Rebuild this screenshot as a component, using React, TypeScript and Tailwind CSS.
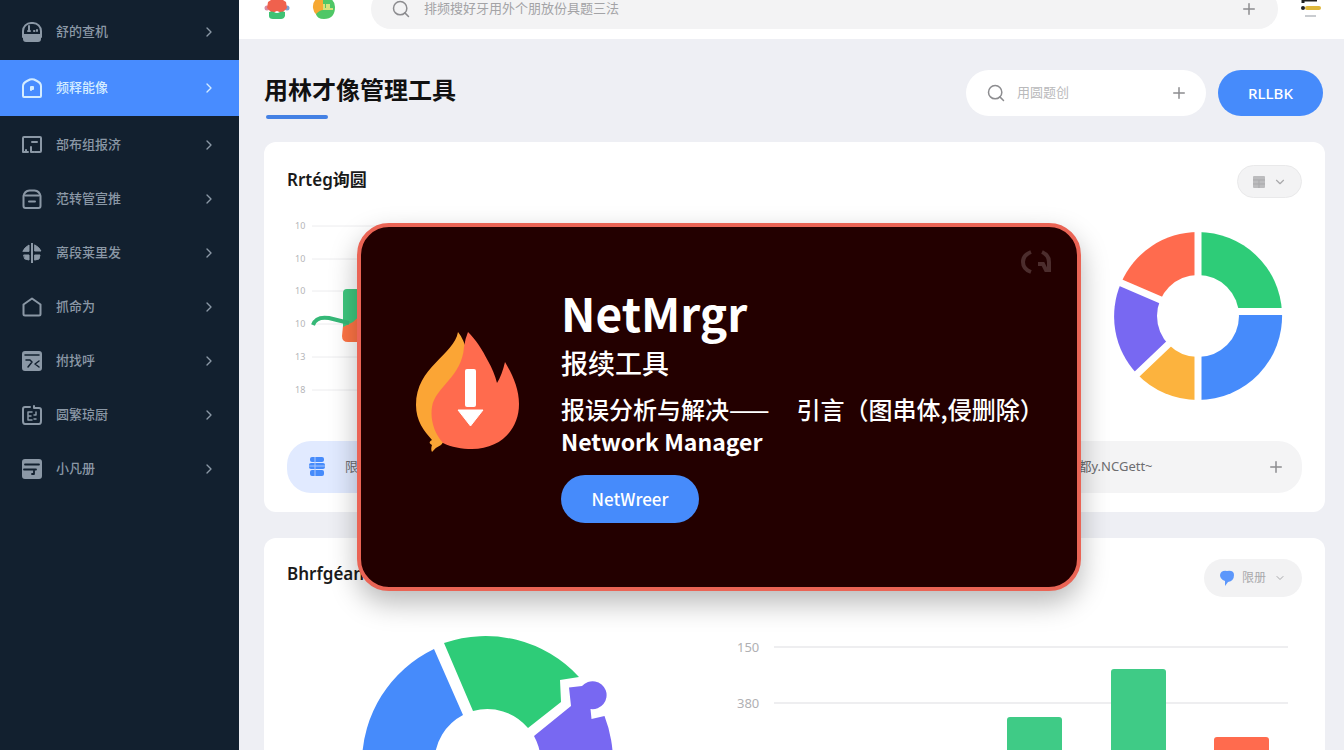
import type { ReactNode } from "react";
import { ChevronDown, ChevronRight, Plus, Search } from "lucide-react";
import clsx from "clsx";

type MenuItem = {
  label: string;
  icon: ReactNode;
  active?: boolean;
};

const MENU: MenuItem[] = [
  {
    label: "舒的查机",
    icon: (
      <>
        <path d="M1 15V9a8 8 0 0 1 8-8h2a8 8 0 0 1 8 8v6" />
        <path d="M7 4v5M6 9h2M12 9h.5M15 8v1" />
        <path d="M2 13h16v4a2 2 0 0 1-2 2H4a2 2 0 0 1-2-2z" fill="currentColor" />
      </>
    ),
  },
  {
    label: "频释能像",
    active: true,
    icon: (
      <>
        <path d="M1 18V8q0-3 4-5l3-1.500q2-.5 4 0L15 3q4 2 4 5v10q0 1-1 1H2q-1 0-1-1z" />
        <path d="M9 9h2v2H9v1z" fill="currentColor" />
      </>
    ),
  },
  {
    label: "部布组报济",
    icon: (
      <>
        <path d="M1 17V3q0-1 1-1h16q1 0 1 1v13q0 1-1 1h-5M1 17h5" />
        <path d="M10 7h5M9 12v5h3M4 17v-2" />
      </>
    ),
  },
  {
    label: "范转管宣推",
    icon: (
      <>
        <path d="M1.500 17V7q1-5 6-5.500h5q5 .5 6 5.500v10q0 2-2 2h-13q-2 0-2-2z" />
        <path d="M3 6.500h14M7 12.500h6" />
      </>
    ),
  },
  {
    label: "离段莱里发",
    icon: (
      <>
        <path d="M10 0v20" />
        <path
          d="M1 8q2-4 6-6v6zM13 2q4 2 6 6h-6zM2 12h5v5l-4-1zM13 12h5l-1 4-4 1z"
          fill="currentColor"
          strokeWidth="1"
        />
      </>
    ),
  },
  {
    label: "抓命为",
    icon: <path d="M1.500 7.500 10 1.500l8.500 6V17q0 1.500-1.500 1.500H3Q1.500 18.500 1.500 17z" />,
  },
  {
    label: "拊找呼",
    icon: (
      <>
        <rect x="1" y="1" width="18" height="18" rx="2" fill="currentColor" />
        <path d="M3 4h14M4 9h4l2 2-4 5M17 10l-4 3 4 3" stroke="#12202f" strokeWidth="1.500" />
      </>
    ),
  },
  {
    label: "圆繁琼厨",
    icon: (
      <>
        <path d="M8 2H3Q1 2 1 4v12q0 3 2 3h14q2 0 2-3V5q0-2-2-2h-5V1" />
        <path d="M10 7H6v8h4M6 11h3M14 7v3h-2M12 14h2" strokeWidth="1.500" />
      </>
    ),
  },
  {
    label: "小凡册",
    icon: (
      <>
        <rect x="1" y="1" width="18" height="18" rx="2" fill="currentColor" />
        <path d="M3 5.500h14M2 10.500h12M10 15h2v-3" stroke="#12202f" strokeWidth="1.800" />
      </>
    ),
  },
];

const TRAFFIC_ROWS = [
  { label: "10", y: 10 },
  { label: "10", y: 43 },
  { label: "10", y: 75 },
  { label: "10", y: 108 },
  { label: "13", y: 141 },
  { label: "18", y: 174 },
];

const BARS = [
  { x: 274, y: 85, color: "#3fcb86" },
  { x: 378, y: 37, color: "#3fcb86" },
  { x: 481, y: 105, color: "#ff6b4e" },
];

function Sidebar() {
  return (
    <aside className="w-[239px] shrink-0 bg-[#12202f] pt-[5px]">
      <nav>
        <ul>
          {MENU.map((item) => (
            <li key={item.label}>
              <a
                href="#"
                className={clsx(
                  "flex items-center pl-[22px] pr-[22px] text-[13px] font-medium",
                  item.active
                    ? "mt-px mb-[2px] h-14 bg-[#488cff] text-[#d4ecff]"
                    : "h-[54px] text-[#8b98a6]",
                )}
              >
                <svg
                  viewBox="0 0 20 20"
                  className="h-5 w-5 shrink-0"
                  fill="none"
                  stroke="currentColor"
                  strokeWidth="2"
                  strokeLinecap="round"
                  strokeLinejoin="round"
                >
                  {item.icon}
                </svg>
                <span className="ml-[14px] flex-1">{item.label}</span>
                <ChevronRight size={16} />
              </a>
            </li>
          ))}
        </ul>
      </nav>
    </aside>
  );
}

function TopBar() {
  return (
    <header className="flex h-[39px] shrink-0 items-end overflow-hidden bg-white">
      <div className="flex h-[60px] flex-1 items-center pl-[25px] pr-[22px]">
        <svg viewBox="0 0 26 26" className="h-[26px] w-[26px]">
          <circle cx="3" cy="12" r="2.500" fill="#d98aa0" />
          <circle cx="23" cy="12" r="2.500" fill="#7d9fd0" />
          <path d="M4 6 13 0l9 6 1 6-5 5-5-2-5 2-5-5z" fill="#f0614d" />
          <path d="M5 16q3-1 5 0 3 2 6 0 3-1 5 0v4q-1 3-4 3H9q-4 0-4-3z" fill="#3fc274" />
        </svg>
        <svg viewBox="0 0 24 26" className="ml-[22px] h-[26px] w-6">
          <path d="M1 12Q0 2 12 0v22Q2 20 1 12z" fill="#f6a833" />
          <path d="M11 0q12 2 12 11 0 12-11 12-7 0-8-5 4-4 7-4z" fill="#4fc766" />
          <path d="M12 8v5h3V9h2v4h4" fill="none" stroke="#d5e27c" strokeWidth="2" />
        </svg>
        <label className="ml-[35px] flex h-10 flex-1 items-center rounded-full bg-[#f3f3f4] px-5 text-[#8c8c8f]">
          <Search size={20} strokeWidth={1.8} />
          <input
            type="search"
            aria-label="搜索"
            placeholder="排频搜好牙用外个朋放份具题三法"
            className="ml-[13px] min-w-0 flex-1 bg-transparent text-[13px] outline-none placeholder:text-[#a3a3a6]"
          />
          <Plus size={18} />
        </label>
        <svg viewBox="0 0 22 22" className="ml-[22px] h-[22px] w-[22px]" fill="none">
          <path d="M3 5V2h14" stroke="#222" strokeWidth="3" />
          <circle cx="3" cy="10" r="2" fill="#222" />
          <path d="M7 10h12" stroke="#dfb83c" strokeWidth="4" strokeLinecap="round" />
          <path d="M5 18h11" stroke="#c9ccd0" strokeWidth="2" />
        </svg>
      </div>
    </header>
  );
}

function PageTitle() {
  return (
    <div className="flex items-start pr-[2px]">
      <div className="mt-1 flex-1">
        <h1 className="text-2xl leading-8 font-bold text-[#111]">用林才像管理工具</h1>
        <div className="mt-[9px] ml-[2px] h-1 w-[62px] rounded-full bg-[#4481e4]" />
      </div>
      <label className="flex h-[46px] w-[240px] items-center rounded-full bg-white pr-[18px] pl-5 text-[#8c8c8f]">
        <Search size={20} strokeWidth={1.8} className="shrink-0" />
        <input
          type="search"
          aria-label="筛选"
          placeholder="用圆题创"
          className="ml-[11px] min-w-0 flex-1 bg-transparent text-[13px] outline-none placeholder:text-[#b9b9bb]"
        />
        <Plus size={18} className="shrink-0" />
      </label>
      <button
        type="button"
        className="ml-3 h-[46px] w-[105px] rounded-full bg-[#468bfb] text-[15px] font-medium text-white"
      >
        RLLBK
      </button>
    </div>
  );
}

function TrafficChart() {
  return (
    <svg viewBox="0 0 560 200" className="h-[200px] w-[560px]">
      {TRAFFIC_ROWS.map((row) => (
        <g key={row.y}>
          <text x="8" y={row.y + 3} fontSize="9" fill="#b5b5b8">
            {row.label}
          </text>
          <path d={`M25 ${row.y}H560`} stroke="#ececee" />
        </g>
      ))}
      <path d="M57 100h60v20q0 6-6 6H61q-6 0-6-6z" fill="#ff7445" />
      <path d="M56 77q0-4 4-4h60v20H80L66 106 56 111z" fill="#3fc77e" />
      <path
        d="M26 109q3-9 16-7l20 5"
        fill="none"
        stroke="#35b877"
        strokeWidth="4"
      />
    </svg>
  );
}

function StatusDonut() {
  return (
    <svg viewBox="0 0 170 170" className="h-[170px] w-[170px]">
      <path d="M85 85V1a84 84 0 0 1 84 80z" fill="#2ecc78" />
      <path d="M85 85 169 81A84 84 0 0 1 85 169z" fill="#468bfb" />
      <path d="M85 85V169A84 84 0 0 1 24 143z" fill="#fcb33e" />
      <path d="M85 85 24 143A84 84 0 0 1 8 52z" fill="#7868f2" />
      <path d="M85 85 8 52A84 84 0 0 1 85 1z" fill="#ff6b4e" />
      <path
        d="M85 0v170M85 80.500h85M85 85 22 145M85 85 6 51"
        stroke="#fff"
        strokeWidth="7"
      />
      <circle cx="85" cy="85" r="41" fill="#fff" />
    </svg>
  );
}

function ShareDonut() {
  return (
    <svg viewBox="0 0 260 260" className="ml-[70px] h-[260px] w-[260px]">
      <path d="M77 17A127 127 0 0 0 77 246L106 177A53 53 0 0 1 106 83z" fill="#468bfb" />
      <path
        d="M87 11A127 127 0 0 1 222 45L203 48 204 70 171 96A53 53 0 0 0 116 79z"
        fill="#2ecc78"
      />
      <path
        d="M177 104 214 74 212 55.500 225 54A14 14 0 1 1 233.500 77L234.500 87 247.500 84A127 127 0 0 1 175 248L150 179A53 53 0 0 0 177 104z"
        fill="#7868f2"
      />
    </svg>
  );
}

function BarChart() {
  return (
    <svg viewBox="0 0 560 260" className="mr-[9px] h-[260px] w-[560px]">
      {["150", "380"].map((label, i) => (
        <g key={label}>
          <text x="4" y={20 + i * 56} fontSize="13" fill="#b0b0b3">
            {label}
          </text>
          <path d={`M41 ${15 + i * 56}H555`} stroke="#e9e9eb" strokeWidth="1.500" />
        </g>
      ))}
      {BARS.map((bar) => (
        <rect
          key={bar.x}
          x={bar.x}
          y={bar.y}
          width="55"
          height={240 - bar.y}
          rx="3"
          fill={bar.color}
        />
      ))}
    </svg>
  );
}

function FlameLogo() {
  return (
    <svg viewBox="0 0 110 130" className="mt-10 h-[130px] w-[110px] shrink-0">
      <path
        d="M48 7C44 30 6 42 6 80c0 16 8 26 16 35-4 2-2 4 0 5-1 3-1 5 0 7q4-5 9-7l16-20L58 30Q54 14 48 7z"
        fill="#fba535"
      />
      <path
        d="M58 7c8 8 14 17 20 29 4 7 7 14 9 22q5-8 8-21c7 12 14 26 14 42 0 26-19 45-47 45-10 0-21-2-29-6C24 108 20 94 22 82 25 62 52 52 54 22q1-8 4-15z"
        fill="#ff6b4e"
      />
      <rect x="55" y="44" width="11" height="38" rx="2" fill="#fff" />
      <path d="M48 85h25l-12.500 16z" fill="#fff" stroke="#fff" strokeLinejoin="round" />
    </svg>
  );
}

function NetMrgrDialog() {
  return (
    <div
      role="dialog"
      aria-label="NetMrgr"
      className="absolute top-[223px] right-[263px] left-[357px] flex rounded-[32px] border-4 border-[#ea6455] bg-[#230000] pt-[58px] pb-16 pl-[49px] font-['Noto_Sans_CJK_SC',sans-serif] text-white shadow-[0_12px_28px_rgba(0,0,0,0.28)]"
    >
      <FlameLogo />
      <div className="ml-[41px] whitespace-nowrap">
        <h2 className="mb-[6px] text-[46px] leading-[54px] font-bold">NetMrgr</h2>
        <p className="text-[27px] leading-9 font-medium">报续工具</p>
        <p className="mt-3 flex gap-[27px] text-2xl leading-8 font-medium">
          <span>报误分析与解决——</span>
          <span>引言（图串体,侵删除）</span>
        </p>
        <p className="text-[23px] leading-8 font-bold">Network Manager</p>
        <button
          type="button"
          className="mt-[18px] h-12 w-[138px] rounded-full bg-[#468bfb] text-[17px] font-medium"
        >
          NetWreer
        </button>
      </div>
      <svg
        viewBox="0 0 30 24"
        className="absolute top-[23px] right-[26px] h-6 w-[30px]"
        fill="none"
        stroke="#4c2d2d"
        strokeWidth="4"
      >
        <path d="M10 2Q2 5 2 12t8 10M21 2q7 3 7 10v8h-3l-3-6h-5" />
      </svg>
    </div>
  );
}

export default function App() {
  return (
    <div className="relative flex h-screen overflow-hidden bg-[#eeeff4] font-['Noto_Sans','Noto_Sans_CJK_SC',sans-serif]">
      <Sidebar />
      <div className="flex min-w-0 flex-1 flex-col">
        <TopBar />
        <main className="min-h-0 flex-1 overflow-hidden pt-[31px] pr-[19px] pl-[25px]">
          <PageTitle />

          <section className="mt-[23px] rounded-xl bg-white px-[23px] pt-[23px] pb-[19px]">
            <div className="flex items-start justify-between">
              <h2 className="text-[17px] leading-[30px] font-semibold text-[#1a1a1a]">Rrtég询圆</h2>
              <button
                type="button"
                aria-label="日期"
                className="flex h-[33px] w-[65px] items-center justify-center gap-2 rounded-full border border-[#e9e9ea] bg-[#f3f3f4] text-[#a9a9ab]"
              >
                <svg viewBox="0 0 12 12" className="h-3 w-3">
                  <rect width="12" height="12" rx="1" fill="#bcbcbe" />
                  <path d="M0 4h12M6 4v8M0 8h12" stroke="#a9a9ab" />
                </svg>
                <ChevronDown size={14} />
              </button>
            </div>
            <div className="flex h-[243px] items-center justify-between pr-[19px] pb-[7px]">
              <TrafficChart />
              <StatusDonut />
            </div>
            <div className="grid grid-cols-2 gap-5 text-[13px] text-[#6d6d70]">
              <a href="#" className="flex h-[52px] items-center rounded-3xl bg-[#e1eaff] pl-[22px]">
                <svg viewBox="0 0 16 20" className="h-5 w-4" fill="#468bfb">
                  <rect x="1" width="14" height="5" rx="2" />
                  <rect y="6" width="16" height="6" rx="2" />
                  <rect x="1" y="13" width="14" height="6" rx="2" />
                  <path d="M6 0v19M0 9h16" stroke="#a9c6fb" />
                </svg>
                <span className="ml-5">限时报告</span>
              </a>
              <a
                href="#"
                className="flex h-[52px] items-center justify-between rounded-3xl bg-[#f4f4f5] pr-[17px] pl-[274px]"
              >
                <span>都y.NCGett~</span>
                <Plus size={18} className="text-[#8c8c8f]" />
              </a>
            </div>
          </section>

          <section className="mt-[26px] rounded-xl bg-white px-[23px] pt-[21px] pb-6">
            <div className="flex items-start justify-between">
              <h2 className="text-[17px] leading-[30px] font-semibold text-[#1a1a1a]">Bhrfgéan</h2>
              <button
                type="button"
                className="flex h-[38px] w-[98px] items-center justify-center gap-2 rounded-full bg-[#f2f2f3] text-xs text-[#a9a9ab]"
              >
                <svg viewBox="0 0 14 16" className="h-4 w-[14px]">
                  <path d="M0 5q1-5 7-4 7-1 7 4 0 6-6 7l-3 4v-5Q0 9 0 5z" fill="#5c97fb" />
                </svg>
                <span>限册</span>
                <ChevronDown size={12} />
              </button>
            </div>
            <div className="mt-[35px] flex justify-between">
              <ShareDonut />
              <BarChart />
            </div>
          </section>
        </main>
      </div>
      <NetMrgrDialog />
    </div>
  );
}
